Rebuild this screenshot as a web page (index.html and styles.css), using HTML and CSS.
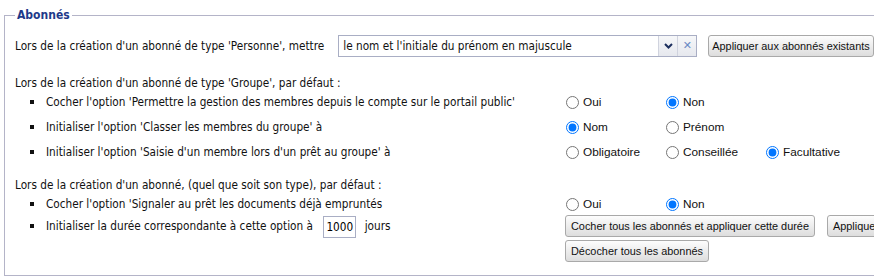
FILE: index.html
```html
<html>
    <head>
        <title>Paramètres - Abonnés</title>
        <link rel="stylesheet" href="styles.css">
    </head>
    <body>
        <fieldset class="settings">
            <legend>Abonnés</legend>

            <div class="person-row">
                <span>Lors de la création d'un abonné de type 'Personne', mettre</span>
                <div class="combo">
                    <span class="combo-value">le nom et l'initiale du prénom en majuscule</span>
                    <span class="combo-arrow">
                        <svg width="9" height="6" viewBox="0 0 9 6"><path d="M1 1 L4.5 4.5 L8 1" fill="none" stroke="#1c2f5e" stroke-width="2"/></svg>
                    </span>
                    <span class="combo-clear">&#x2715;</span>
                </div>
                <button class="btn">Appliquer aux abonnés existants</button>
            </div>

            <div class="section group-section">
                <div class="section-title">Lors de la création d'un abonné de type 'Groupe', par défaut :</div>
                <ul class="options">
                    <li>
                        <span class="label">Cocher l'option 'Permettre la gestion des membres depuis le compte sur le portail public'</span>
                        <span class="choices">
                            <label class="choice"><input type="radio" name="gestion">Oui</label>
                            <label class="choice"><input type="radio" name="gestion" checked>Non</label>
                        </span>
                    </li>
                    <li>
                        <span class="label">Initialiser l'option 'Classer les membres du groupe' à</span>
                        <span class="choices">
                            <label class="choice"><input type="radio" name="classer" checked>Nom</label>
                            <label class="choice"><input type="radio" name="classer">Prénom</label>
                        </span>
                    </li>
                    <li>
                        <span class="label">Initialiser l'option 'Saisie d'un membre lors d'un prêt au groupe' à</span>
                        <span class="choices">
                            <label class="choice"><input type="radio" name="saisie">Obligatoire</label>
                            <label class="choice"><input type="radio" name="saisie">Conseillée</label>
                            <label class="choice"><input type="radio" name="saisie" checked>Facultative</label>
                        </span>
                    </li>
                </ul>
            </div>

            <div class="section all-section">
                <div class="section-title">Lors de la création d'un abonné, (quel que soit son type), par défaut :</div>
                <ul class="options">
                    <li class="short">
                        <span class="label">Cocher l'option 'Signaler au prêt les documents déjà empruntés</span>
                        <span class="choices">
                            <label class="choice"><input type="radio" name="signaler">Oui</label>
                            <label class="choice"><input type="radio" name="signaler" checked>Non</label>
                        </span>
                    </li>
                    <li class="with-buttons">
                        <span class="label">Initialiser la durée correspondante à cette option à <input class="days" type="text" value="1000"> jours</span>
                        <span class="choices buttons">
                            <span class="button-line">
                                <button class="btn">Cocher tous les abonnés et appliquer cette durée</button>
                                <button class="btn">Appliquer</button>
                            </span>
                            <span class="button-line">
                                <button class="btn">Décocher tous les abonnés</button>
                            </span>
                        </span>
                    </li>
                </ul>
            </div>
        </fieldset>
    </body>
</html>
```

FILE: styles.css
```css
body
{
    margin: 8px 0 0 4px;
    overflow: hidden;

    font-family: "DejaVu Sans Condensed", "DejaVu Sans", sans-serif;
    font-size: 11.7px;
    color: #111111;
    background-color: #FFFFFF;
}

fieldset.settings
{
    width: 1000px;
    margin: 0;
    padding: 0 10px 13px 10px;
    border: 1px solid #B4B4C8;
}

fieldset.settings > legend
{
    padding: 0 2px;
    line-height: 15px;

    font-size: 12px;
    font-weight: bold;
    color: #1E3A8A;
}

.person-row
{
    display: flex;
    align-items: center;
    height: 23px;
    margin-top: 11px;
}

.combo
{
    display: flex;
    width: 357px;
    height: 20px;
    margin-left: 14px;
    border: 1px solid #A9AEC4;
}

.combo-value
{
    flex: 1;
    padding-left: 4px;
    line-height: 20px;
}

.combo-arrow, .combo-clear
{
    display: flex;
    align-items: center;
    justify-content: center;
    width: 18px;
    border-left: 1px solid #D0D3DE;
    background: linear-gradient(#F6F7F9, #E6E8EE);
}

.combo-clear
{
    font-family: "DejaVu Sans", sans-serif;
    font-size: 11px;
    font-weight: bold;
    color: #6A8AC4;
}

.btn
{
    height: 22px;
    padding: 0 5px;
    border: 1px solid #A9A9A9;
    border-radius: 3px;
    background: linear-gradient(#FDFDFD, #DDDDDD);

    font-family: "Liberation Sans", Arial, sans-serif;
    font-size: 10.9px;
    color: #111111;
    white-space: nowrap;
}

.person-row > .btn
{
    margin-left: 11px;
    padding: 0 3px;
}

.section
{
    margin-top: 17px;
}

.all-section
{
    margin-top: 14px;
}

.section-title
{
    line-height: 18px;
}

ul.options
{
    margin: 0;
    padding: 0;
    list-style: none;
}

ul.options > li
{
    display: grid;
    grid-template-columns: 31px 519px auto;
    align-items: center;
    height: 20px;
    margin-bottom: 5px;
}

ul.options > li::before
{
    content: "";
    justify-self: end;
    width: 4px;
    height: 4px;
    margin-right: 12px;
    background-color: #111111;
}

ul.options > li.short
{
    height: 18px;
    margin-top: 1px;
    margin-bottom: 2px;
}

ul.options > li.with-buttons
{
    align-items: start;
    height: auto;
    margin-bottom: 0;
}

li.with-buttons > .label
{
    line-height: 22px;
}

li.with-buttons::before
{
    margin-top: 9px;
}

.choices
{
    display: flex;
}

.choice
{
    display: flex;
    align-items: center;
    width: 100px;

    font-family: "Liberation Sans", Arial, sans-serif;
    font-size: 11.8px;
}

.choice > input
{
    width: 13px;
    height: 13px;
    margin: 0 4px 0 1px;
}

.choices.buttons
{
    flex-direction: column;
    gap: 3px;
}

.button-line
{
    display: flex;
    gap: 12px;
}

input.days
{
    width: 33px;
    height: 22px;
    box-sizing: border-box;
    margin: 0 5px 0 7px;
    padding: 0;
    border: 1px solid #A9AEC4;
    vertical-align: middle;

    font-family: inherit;
    font-size: inherit;
    text-align: center;
}
```
